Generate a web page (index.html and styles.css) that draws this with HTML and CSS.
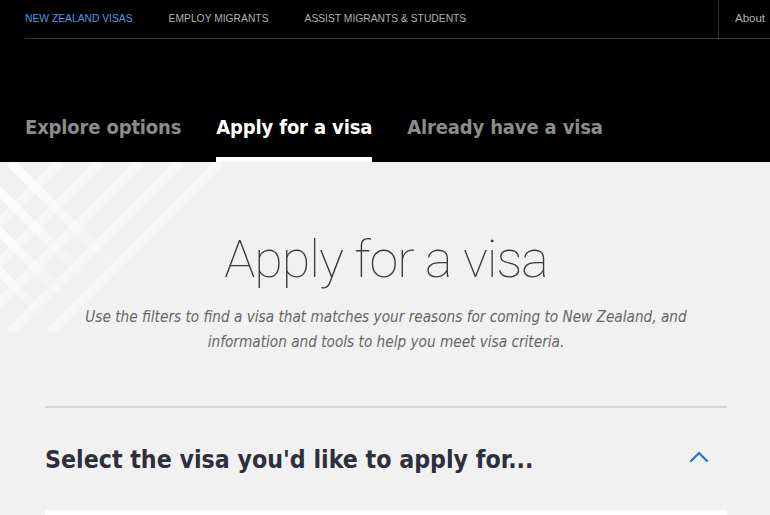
FILE: index.html
```html
<!DOCTYPE html>
<html lang="en">
<head>
<meta charset="utf-8">
<title>Apply for a visa</title>
<link rel="stylesheet" href="styles.css">
</head>
<body>
<header class="site-header">
  <div class="top-nav">
    <nav class="top-links">
      <a class="top-link active" href="#">New Zealand Visas</a>
      <a class="top-link" href="#">Employ Migrants</a>
      <a class="top-link" href="#">Assist Migrants &amp; Students</a>
    </nav>
    <div class="top-right">
      <a class="about" href="#">About</a>
    </div>
  </div>
  <nav class="tabs">
    <a class="tab" href="#">Explore options</a>
    <a class="tab current" href="#">Apply for a visa</a>
    <a class="tab" href="#">Already have a visa</a>
  </nav>
</header>
<main class="page">
  <svg class="pattern" width="260" height="170" viewBox="0 0 260 170" aria-hidden="true">
    <defs>
      <linearGradient id="fade" x1="0" y1="0" x2="1" y2="1">
        <stop offset="0" stop-color="#fff" stop-opacity="0.8"/>
        <stop offset="0.75" stop-color="#fff" stop-opacity="0.18"/>
        <stop offset="1" stop-color="#fff" stop-opacity="0"/>
      </linearGradient>
    </defs>
    <g stroke="url(#fade)" stroke-width="9" fill="none">
      <line x1="60" y1="0" x2="-110" y2="170"/>
      <line x1="100" y1="0" x2="-70" y2="170"/>
      <line x1="140" y1="0" x2="-30" y2="170"/>
      <line x1="180" y1="0" x2="10" y2="170"/>
      <line x1="220" y1="0" x2="50" y2="170"/>
      <line x1="-10" y1="20" x2="100" y2="130"/>
      <line x1="-10" y1="60" x2="70" y2="140"/>
      <line x1="10" y1="0" x2="130" y2="120"/>
      <line x1="-10" y1="100" x2="50" y2="160"/>
    </g>
  </svg>
  <section class="intro">
    <h1 class="title">Apply for a visa</h1>
    <p class="lead">Use the filters to find a visa that matches your reasons for coming to New Zealand, and information and tools to help you meet visa criteria.</p>
  </section>
  <section class="selector">
    <div class="selector-head">
      <h2 class="selector-title">Select the visa you'd like to apply for...</h2>
      <svg class="chevron" width="20" height="12" viewBox="0 0 20 12" aria-hidden="true">
        <path d="M2 10 L10 2 L18 10" fill="none" stroke="#2a7bc4" stroke-width="2.4" stroke-linecap="round" stroke-linejoin="round"/>
      </svg>
    </div>
    <div class="selector-box"></div>
  </section>
</main>
</body>
</html>
```
FILE: styles.css
```css
* { box-sizing: border-box; }
html, body { margin: 0; padding: 0; }
body {
  background: #f1f1f1;
  font-family: "DejaVu Sans Condensed", "DejaVu Sans", sans-serif;
  color: #2d2f38;
  overflow: hidden;
}
a { text-decoration: none; }

.site-header { background: #000; }

.top-nav {
  margin-left: 25px;
  height: 39px;
  display: flex;
  justify-content: space-between;
  border-bottom: 1px solid #3a3a3a;
}
.top-links { display: flex; align-items: center; gap: 36px; padding-bottom: 2px; }
.top-link {
  font-family: "Liberation Sans", sans-serif;
  font-size: 10.3px;
  text-transform: uppercase;
  color: #b0b0b0;
}
.top-link.active { color: #4a9be6; }
.top-right {
  display: flex;
  align-items: center;
  border-left: 1px solid #333;
  padding-left: 16px;
  padding-bottom: 2px;
  width: 52px;
}
.about {
  font-family: "Liberation Sans", sans-serif;
  font-size: 11.5px;
  color: #b0b0b0;
}

.tabs {
  display: flex;
  gap: 35px;
  padding: 0 0 0 25px;
  height: 123px;
  align-items: flex-end;
}
.tab {
  font-size: 20px;
  letter-spacing: -0.15px;
  font-weight: bold;
  color: #8c8c8c;
  padding-bottom: 18px;
  border-bottom: 5px solid transparent;
  line-height: 24px;
}
.tab.current { color: #fff; border-bottom-color: #fff; }

.page {
  position: relative;
  padding: 0 43px 0 45px;
}
.pattern { position: absolute; left: 0; top: 0; }

.intro {
  position: relative;
  text-align: center;
  padding-top: 66px;
  padding-bottom: 51px;
  border-bottom: 2px solid #d6d6d6;
}
.title {
  margin: 0;
  font-family: "Roboto", sans-serif;
  font-weight: 100;
  font-size: 52px;
  line-height: 64px;
  color: #3a3a3a;
  letter-spacing: -1px;
}
.lead {
  margin: 13px auto 0;
  max-width: 640px;
  font-style: italic;
  font-size: 15.2px;
  line-height: 25px;
  color: #666;
}

.selector-head {
  display: flex;
  justify-content: space-between;
  padding: 37px 18px 0 0;
  height: 102px;
}
.selector-title {
  margin: 0;
  font-size: 24.7px;
  font-weight: bold;
  color: #2d2f3b;
}
.chevron { margin-top: 6px; }
.selector-box {
  background: #fff;
  height: 60px;
}
```
